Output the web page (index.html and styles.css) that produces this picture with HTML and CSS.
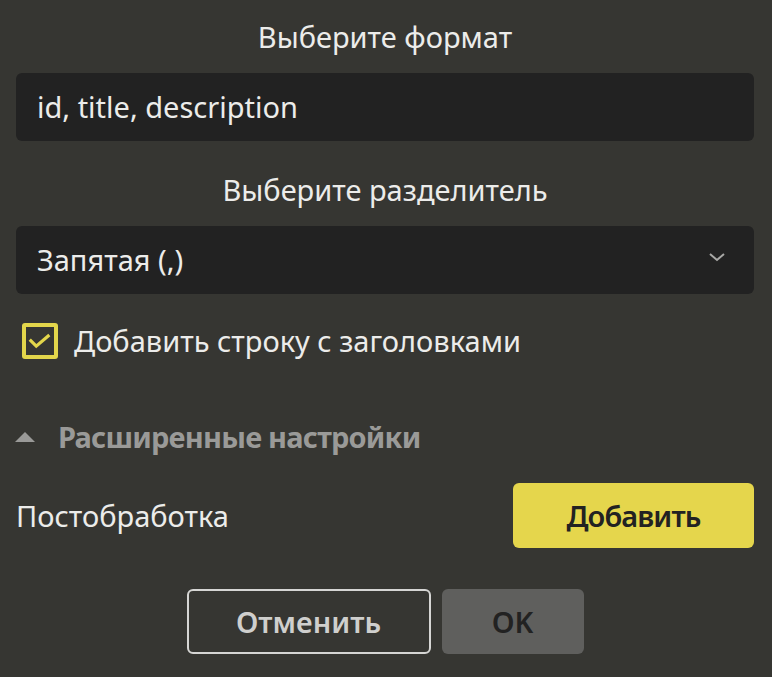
FILE: index.html
```html
<!DOCTYPE html>
<html lang="ru">
<head>
  <meta charset="UTF-8" />
  <meta name="viewport" content="width=device-width, initial-scale=1.0"/>
  <title>Экспорт CSV</title>
  <link rel="stylesheet" href="styles.css">
</head>
<body>
  <div class="dialog">
    <div class="field-title">Выберите формат</div>
    <div class="field">id, title, description</div>

    <div class="field-title second">Выберите разделитель</div>
    <div class="field select">
      <span>Запятая (,)</span>
      <svg class="chevron" width="18" height="10" viewBox="0 0 18 10">
        <path d="M2 2 L9 8 L16 2" fill="none" stroke="#a8a8a6" stroke-width="2"/>
      </svg>
    </div>

    <label class="check-row">
      <span class="checkbox">
        <svg width="30" height="30" viewBox="0 0 30 30">
          <path d="M4 13.5 L11 20.5 L25 8.5" fill="none" stroke="#e3d64b" stroke-width="3.4"/>
        </svg>
      </span>
      Добавить строку с заголовками
    </label>

    <div class="advanced">
      <span class="triangle"></span>
      Расширенные настройки
    </div>

    <div class="post-row">
      <span>Постобработка</span>
      <button class="btn btn-yellow">Добавить</button>
    </div>

    <div class="actions">
      <button class="btn btn-outline">Отменить</button>
      <button class="btn btn-gray">OK</button>
    </div>
  </div>
</body>
</html>
```

FILE: styles.css
```css
body {
  background: #363632;
  font-family: 'Noto Sans', 'Open Sans', sans-serif;
  color: #ececea;
  margin: 0;
}
.dialog {
  padding: 19px 18px 0 16px;
  display: flex;
  flex-direction: column;
  font-size: 29px;
  line-height: 36px;
}
.field-title {
  height: 36px;
  text-align: center;
}
.field-title.second {
  margin-top: 31px;
}
.field {
  margin-top: 18px;
  height: 68px;
  box-sizing: border-box;
  background: #222222;
  border-radius: 6px;
  padding: 0 21px;
  display: flex;
  align-items: center;
}
.select {
  justify-content: space-between;
  padding-right: 28px;
}
.chevron {
  margin-top: -6px;
}
.check-row {
  margin-top: 29px;
  display: flex;
  align-items: center;
  gap: 16px;
  padding-left: 6px;
}
.checkbox {
  width: 36px;
  height: 36px;
  box-sizing: border-box;
  border: 4px solid #e3d64b;
  border-radius: 3px;
  display: flex;
  align-items: center;
  justify-content: center;
}
.advanced {
  margin-top: 60px;
  display: flex;
  align-items: center;
  gap: 23px;
  font-weight: bold;
  color: #9a9a98;
  letter-spacing: -0.8px;
}
.triangle {
  width: 0;
  height: 0;
  border-left: 10px solid transparent;
  border-right: 10px solid transparent;
  border-bottom: 10px solid #9a9a98;
  margin-left: -1px;
}
.post-row {
  margin-top: 28px;
  display: flex;
  justify-content: space-between;
  align-items: center;
}
.btn {
  font-family: inherit;
  font-size: 29px;
  font-weight: 600;
  height: 65px;
  border-radius: 6px;
  cursor: pointer;
}
.btn-yellow {
  width: 241px;
  background: #e5d64c;
  border: none;
  color: #222;
  letter-spacing: -0.9px;
}
.actions {
  margin-top: 41px;
  display: flex;
  justify-content: center;
  gap: 11px;
}
.btn-outline {
  width: 244px;
  background: transparent;
  border: 2px solid #d6d6d4;
  color: #cfcfcd;
}
.btn-outline:hover {
  background: #3f3f3b;
}
.btn-gray {
  width: 142px;
  background: #5f5f5d;
  border: none;
  color: #222;
}
```
